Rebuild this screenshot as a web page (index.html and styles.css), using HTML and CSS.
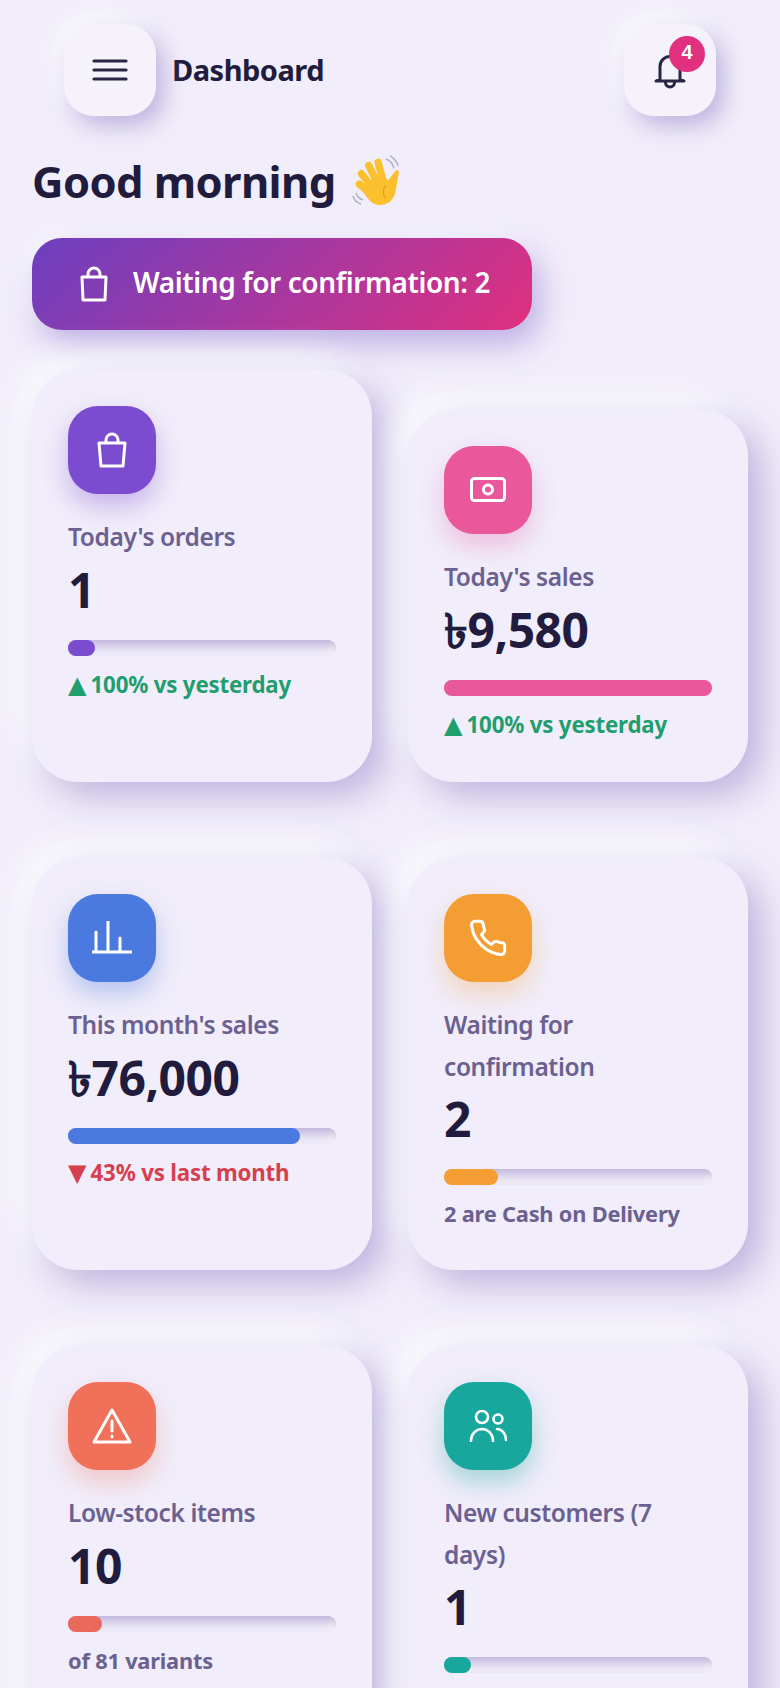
FILE: index.html
```html
<!DOCTYPE html>
<html lang="en">
<head>
    <meta charset="UTF-8">
    <meta name="viewport" content="width=device-width, initial-scale=1.0">
    <title>Dashboard</title>
    <link rel="stylesheet" href="styles.css">
</head>
<body>
    <div class="app">
        <header class="topbar">
            <button class="neu-btn" type="button" aria-label="Menu">
                <svg class="ico-menu" viewBox="0 0 36 24"><path d="M2 3h32M2 12h32M2 21h32"/></svg>
            </button>
            <div class="topbar-title">Dashboard</div>
            <button class="neu-btn bell-btn" type="button" aria-label="Notifications">
                <svg class="ico-bell" viewBox="0 0 36 36"><path d="M8 25V12.5a10 10 0 0 1 20 0V25l4 2H4zM13.5 28.500a4.500 4.500 0 0 0 9 0"/></svg>
                <span class="badge">4</span>
            </button>
        </header>

        <h1 class="greeting">Good morning
            <svg class="wave" viewBox="10 15 50 50">
                <path class="wave-air" d="M45 19c3 1 6 4 7 8M49 16c3 2 6 5 7 9M16 52c1 3 3 5 6 6M13 55c1 3 4 6 7 7"/>
                <path class="wave-finger" d="M19 43l14 12M21 33l15 19M28 25l12 25M37 22l7 26"/>
                <path class="wave-palm" d="M24 42l15-6 8 3 7-9c2-1 3 0 3 2l-3 17c-1 10-9 15-17 14-7-1-11-7-16-15z"/>
                <path class="wave-crease" d="M44 44c-3 5-2 9 0 13"/>
            </svg>
        </h1>

        <div class="banner">
            <svg class="ico-line ico-bag banner-ico" viewBox="0 0 30 36"><path d="M3 11h24l-1 23H4zM9 11V8a6 6 0 0 1 12 0v3"/></svg>
            <span class="banner-text">Waiting for confirmation: 2</span>
        </div>

        <main class="cards">
            <section class="card card-first">
                <div class="tile tile-purple">
                    <svg class="ico-line ico-bag" viewBox="0 0 30 36"><path d="M2 11h26l-2 23H4zM9 11V8a6 6 0 0 1 12 0v3"/></svg>
                </div>
                <div class="label">Today's orders</div>
                <div class="value">1</div>
                <div class="track"><div class="fill fill-purple" style="width: 10%"></div></div>
                <div class="foot up"><span class="arrow">▲</span> 100% vs yesterday</div>
            </section>

            <section class="card card-short">
                <div class="tile tile-pink">
                    <svg class="ico-line ico-money" viewBox="0 0 36 26"><rect x="1.500" y="1.500" width="33" height="22" rx="3"/><circle cx="18" cy="12.500" r="4.500"/></svg>
                </div>
                <div class="label">Today's sales</div>
                <div class="value">৳9,580</div>
                <div class="track"><div class="fill fill-pink" style="width: 100%"></div></div>
                <div class="foot up"><span class="arrow">▲</span> 100% vs yesterday</div>
            </section>

            <section class="card">
                <div class="tile tile-blue">
                    <svg class="ico-line ico-chart" viewBox="0 0 40 34"><path d="M0 31h40M4 31V11M16 31V1M28 31V17"/></svg>
                </div>
                <div class="label">This month's sales</div>
                <div class="value">৳76,000</div>
                <div class="track"><div class="fill fill-blue" style="width: 86.500%"></div></div>
                <div class="foot down"><span class="arrow">▼</span> 43% vs last month</div>
            </section>

            <section class="card">
                <div class="tile tile-orange">
                    <svg class="ico-line ico-phone" viewBox="0 0 24 24"><path d="M22 16.920v3a2 2 0 0 1-2.180 2 19.790 19.790 0 0 1-8.630-3.070 19.500 19.500 0 0 1-6-6 19.790 19.790 0 0 1-3.070-8.670A2 2 0 0 1 4.110 2h3a2 2 0 0 1 2 1.720 12.840 12.840 0 0 0 .7 2.810 2 2 0 0 1-.45 2.110L8.090 9.910a16 16 0 0 0 6 6l1.270-1.270a2 2 0 0 1 2.110-.45 12.840 12.840 0 0 0 2.810.7A2 2 0 0 1 22 16.92z"/></svg>
                </div>
                <div class="label">Waiting for<br>confirmation</div>
                <div class="value">2</div>
                <div class="track"><div class="fill fill-orange" style="width: 20%"></div></div>
                <div class="foot muted">2 are Cash on Delivery</div>
            </section>

            <section class="card">
                <div class="tile tile-coral">
                    <svg class="ico-line ico-warn" viewBox="0 0 40 36"><path d="M20 2L38 34H2zM20 13v10M20 28v1"/></svg>
                </div>
                <div class="label">Low-stock items</div>
                <div class="value">10</div>
                <div class="track"><div class="fill fill-coral" style="width: 12.700%"></div></div>
                <div class="foot muted">of 81 variants</div>
            </section>

            <section class="card">
                <div class="tile tile-teal">
                    <svg class="ico-line ico-users" viewBox="0 0 38 32"><circle cx="13" cy="7" r="6"/><circle cx="29" cy="9" r="4.500"/><path d="M2 31c0-7 5-12 11-12s11 5 11 12M28 19c5 0 9 5 9 11"/></svg>
                </div>
                <div class="label">New customers (7<br>days)</div>
                <div class="value">1</div>
                <div class="track"><div class="fill fill-teal" style="width: 10%"></div></div>
            </section>
        </main>
    </div>
</body>
</html>
```

FILE: styles.css
```css
html, body {
    height: 1688px;
    overflow: hidden;
}
body {
    margin: 0;
    background-color: #f1edfa;
    color: #211c3d;
    font-family: "Noto Sans", "Liberation Sans", sans-serif;
}
.app {
    padding: 0 32px;
}
.topbar {
    display: flex;
    align-items: center;
    padding: 24px 32px 0;
}
.topbar-title {
    flex: 1;
    margin: -2px 0 0 16px;
    font-size: 29px;
    font-weight: 700;
    letter-spacing: -0.5px;
}
.neu-btn {
    position: relative;
    display: flex;
    align-items: center;
    justify-content: center;
    width: 92px;
    height: 92px;
    padding: 0;
    border: none;
    border-radius: 30px;
    background: #f5f2fb;
    box-shadow: 8px 10px 22px rgba(150, 135, 200, 0.55), -8px -8px 22px rgba(255, 255, 255, 0.8);
}
.ico-menu {
    width: 36px;
    height: 24px;
    fill: none;
    stroke: #2a2545;
    stroke-width: 3.2;
    stroke-linecap: round;
}
.ico-bell {
    width: 36px;
    height: 36px;
    margin: 3px 0 0 0;
    fill: none;
    stroke: #2a2545;
    stroke-width: 3;
    stroke-linejoin: round;
    stroke-linecap: round;
}
.badge {
    position: absolute;
    top: 12px;
    left: 45px;
    width: 36px;
    height: 36px;
    border-radius: 50%;
    background: #e0307f;
    color: white;
    font-size: 20px;
    font-weight: 700;
    line-height: 32px;
    text-align: center;
}
.greeting {
    display: flex;
    align-items: center;
    gap: 14px;
    margin: 36px 0 0;
    font-size: 43.5px;
    font-weight: 700;
    line-height: 58px;
    letter-spacing: -0.6px;
}
.wave {
    width: 52px;
    height: 52px;
}
.wave-air {
    fill: none;
    stroke: #a9b4c4;
    stroke-width: 1.500;
    stroke-linecap: round;
}
.wave-finger {
    fill: none;
    stroke: #fbc02d;
    stroke-width: 7;
    stroke-linecap: round;
}
.wave-palm {
    fill: #fbc02d;
}
.wave-crease {
    fill: none;
    stroke: #e39a12;
    stroke-width: 1;
}
.banner {
    display: flex;
    align-items: center;
    gap: 24px;
    width: 500px;
    height: 92px;
    margin-top: 28px;
    padding-left: 47px;
    box-sizing: border-box;
    border-radius: 30px;
    background: linear-gradient(135deg, #6c3fc0 0%, #e0307f 100%);
    box-shadow: 8px 14px 30px rgba(140, 115, 210, 0.5), -8px -8px 22px rgba(255, 255, 255, 0.6);
    color: white;
    font-size: 28px;
    font-weight: 600;
    letter-spacing: -0.4px;
}
.banner-text {
    margin-top: -5px;
}
.ico-line {
    fill: none;
    stroke: white;
    stroke-width: 3;
    stroke-linejoin: round;
    stroke-linecap: round;
}
.ico-bag {
    width: 30px;
    height: 36px;
}
.banner-ico {
    flex: none;
}
.cards {
    display: grid;
    grid-template-columns: 340px 340px;
    column-gap: 36px;
    row-gap: 76px;
    margin-top: 40px;
}
.card {
    min-height: 412px;
    box-sizing: border-box;
    padding: 36px;
    border-radius: 46px;
    background: #f1edfa;
    box-shadow: 14px 14px 34px rgba(150, 135, 200, 0.55), -14px -14px 30px rgba(255, 255, 255, 0.8);
}
.card-short {
    align-self: end;
    min-height: 372px;
}
.tile {
    display: flex;
    align-items: center;
    justify-content: center;
    width: 88px;
    height: 88px;
    border-radius: 30px;
}
.tile-purple { background: #7b4bd0; box-shadow: 0 12px 24px rgba(123, 75, 208, 0.35); }
.tile-pink { background: #e8589a; box-shadow: 0 12px 24px rgba(232, 88, 154, 0.3); }
.tile-blue { background: #4a7ae0; box-shadow: 0 12px 24px rgba(74, 122, 224, 0.35); }
.tile-orange { background: #f39d33; box-shadow: 0 12px 24px rgba(243, 157, 51, 0.3); }
.tile-coral { background: #f0705a; box-shadow: 0 12px 24px rgba(240, 112, 90, 0.3); }
.tile-teal { background: #17a79c; box-shadow: 0 12px 24px rgba(23, 167, 156, 0.35); }
.ico-money { width: 36px; height: 26px; }
.ico-chart { width: 40px; height: 34px; }
.ico-phone { width: 40px; height: 40px; stroke-width: 1.800; }
.ico-warn { width: 40px; height: 36px; }
.ico-users { width: 38px; height: 32px; stroke-width: 2.600; }
.label {
    margin-top: 22px;
    color: #6b6190;
    font-size: 24.5px;
    font-weight: 600;
    line-height: 41.5px;
    letter-spacing: -0.4px;
}
.value {
    margin-top: 2px;
    font-size: 48px;
    font-weight: 700;
    line-height: 60px;
    letter-spacing: -0.5px;
}
.track {
    height: 16px;
    margin-top: 20px;
    border-radius: 8px;
    background: #e6e0f2;
    box-shadow: inset 3px 4px 7px rgba(150, 135, 200, 0.5), inset -3px -3px 6px rgba(255, 255, 255, 0.6);
}
.fill {
    height: 100%;
    border-radius: 8px;
}
.fill-purple { background: #7b4bd0; }
.fill-pink { background: #e8589a; }
.fill-blue { background: #4a7ae0; }
.fill-orange { background: #f39d33; }
.fill-coral { background: #e9695a; }
.fill-teal { background: #17a79c; }
.foot {
    margin-top: 11px;
    font-size: 22.3px;
    font-weight: 700;
    line-height: 36px;
    letter-spacing: -0.2px;
}
.arrow {
    font-family: "DejaVu Sans", sans-serif;
    font-size: 24px;
    letter-spacing: -1.5px;
}
.up { color: #1f9e6e; }
.down { color: #d63f4d; }
.muted { color: #6b6190; font-size: 21.8px; }
```
